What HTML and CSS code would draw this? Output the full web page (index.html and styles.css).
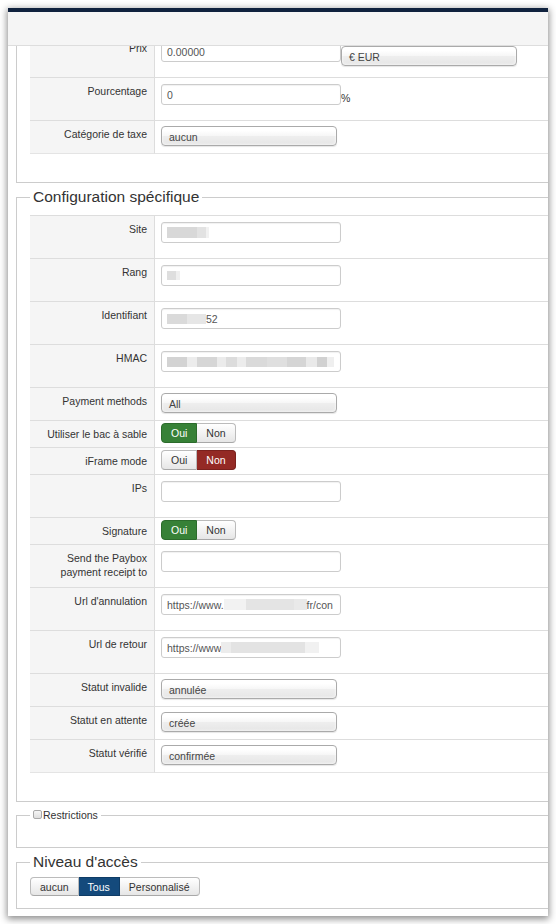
FILE: index.html
```html
<!DOCTYPE html>
<html lang="fr">
<head>
<meta charset="utf-8">
<title>Configuration</title>
<link rel="stylesheet" href="styles.css">
</head>
<body>
<div class="window">
  <div class="topbar"></div>
  <div class="toolbar"></div>
  <div class="viewport">
    <fieldset class="fs fs-first">
      <table class="params">
        <tr>
          <td class="key">Prix</td>
          <td class="field v-input"><div class="line"><div class="input">0.00000</div><div class="select cur">€ EUR</div></div></td>
        </tr>
        <tr>
          <td class="key">Pourcentage</td>
          <td class="field v-input"><div class="line"><div class="input">0</div><span class="unit">%</span></div></td>
        </tr>
        <tr>
          <td class="key">Catégorie de taxe</td>
          <td class="field v-select"><div class="select">aucun</div></td>
        </tr>
      </table>
    </fieldset>

    <fieldset class="fs fs-config">
      <legend class="big">Configuration spécifique</legend>
      <table class="params">
        <tr>
          <td class="key">Site</td>
          <td class="field v-input"><div class="input"><span class="rd rd-site"></span></div></td>
        </tr>
        <tr>
          <td class="key">Rang</td>
          <td class="field v-input"><div class="input"><span class="rd rd-rang"></span></div></td>
        </tr>
        <tr>
          <td class="key">Identifiant</td>
          <td class="field v-input"><div class="input"><span class="rd rd-ident"></span>52</div></td>
        </tr>
        <tr>
          <td class="key">HMAC</td>
          <td class="field v-input"><div class="input"><span class="rd rd-hmac"></span></div></td>
        </tr>
        <tr>
          <td class="key">Payment methods</td>
          <td class="field v-select"><div class="select">All</div></td>
        </tr>
        <tr>
          <td class="key">Utiliser le bac à sable</td>
          <td class="field v-toggle"><div class="btn-group"><span class="btn yes">Oui</span><span class="btn">Non</span></div></td>
        </tr>
        <tr>
          <td class="key">iFrame mode</td>
          <td class="field v-toggle"><div class="btn-group"><span class="btn">Oui</span><span class="btn no">Non</span></div></td>
        </tr>
        <tr>
          <td class="key">IPs</td>
          <td class="field v-input"><div class="input"></div></td>
        </tr>
        <tr>
          <td class="key">Signature</td>
          <td class="field v-toggle"><div class="btn-group"><span class="btn yes">Oui</span><span class="btn">Non</span></div></td>
        </tr>
        <tr>
          <td class="key">Send the Paybox payment receipt to</td>
          <td class="field v-input"><div class="input"></div></td>
        </tr>
        <tr>
          <td class="key">Url d'annulation</td>
          <td class="field v-input"><div class="input">https://www.<span class="rd rd-url1"></span>fr/con</div></td>
        </tr>
        <tr>
          <td class="key">Url de retour</td>
          <td class="field v-input"><div class="input">https://www<span class="rd rd-url2"></span></div></td>
        </tr>
        <tr>
          <td class="key">Statut invalide</td>
          <td class="field v-select"><div class="select">annulée</div></td>
        </tr>
        <tr>
          <td class="key">Statut en attente</td>
          <td class="field v-select"><div class="select">créée</div></td>
        </tr>
        <tr>
          <td class="key">Statut vérifié</td>
          <td class="field v-select"><div class="select">confirmée</div></td>
        </tr>
      </table>
    </fieldset>

    <fieldset class="fs fs-restr">
      <legend class="small"><span class="checkbox"></span>Restrictions</legend>
    </fieldset>

    <fieldset class="fs fs-access">
      <legend class="big">Niveau d'accès</legend>
      <div class="btn-group access">
        <span class="btn">aucun</span><span class="btn primary">Tous</span><span class="btn">Personnalisé</span>
      </div>
    </fieldset>
  </div>
</div>
</body>
</html>
```
FILE: styles.css
```css
html, body {
  margin: 0;
  padding: 0;
  background: #ffffff;
}

body {
  font-family: "Liberation Sans", Arial, sans-serif;
  font-size: 10.5px;
  color: #333333;
}

.window {
  margin: 8px;
  width: 540px;
  height: 908px;
  overflow: hidden;
  background: #ffffff;
  box-shadow: 0 2px 7px 1px rgba(0, 0, 0, 0.45);
  display: flex;
  flex-direction: column;
}

.topbar {
  flex: none;
  height: 4px;
  background: #10223e;
}

.toolbar {
  flex: none;
  height: 33px;
  background: #f5f5f5;
  border-bottom: 1px solid #dddddd;
}

.viewport {
  flex: 1;
  overflow: hidden;
}

/* fieldsets */
.fs {
  width: 560px;
  box-sizing: border-box;
  margin: 5px 0 0 8px;
  padding: 0 0 28px 13px;
  border: 1px solid #cccccc;
  min-width: 0;
}

.fs-first {
  margin-top: -12px;
  border-top: none;
}

.fs-config {
  padding-top: 9px;
}

.fs-restr {
  padding-bottom: 24px;
}

.fs-access {
  padding-top: 6px;
  padding-bottom: 12px;
}

legend {
  padding: 0 3px;
  margin: 0;
  color: #333333;
}

legend.big {
  font-size: 15.5px;
  line-height: 18px;
}

legend.small {
  font-size: 10.5px;
  line-height: 16px;
  display: flex;
  align-items: center;
}

.checkbox {
  display: inline-block;
  width: 9px;
  height: 9px;
  box-sizing: border-box;
  border: 1px solid #a9a9a9;
  border-radius: 2px;
  background: linear-gradient(#f6f6f6, #dedede);
  margin-right: 1px;
  margin-top: -1px;
}

/* parameter table */
.params {
  border-collapse: separate;
  border-spacing: 0;
  width: 540px;
}

.params td {
  border-top: 1px solid #dddddd;
  vertical-align: top;
}

.params tr:last-child td {
  border-bottom: 1px solid #e4e4e4;
}

.key {
  width: 111px;
  padding: 6px 7px 0 6px;
  background: #f5f5f5;
  border-right: 1px solid #dddddd;
  text-align: right;
  line-height: 14px;
  color: #333333;
}

.field {
  padding-left: 6px;
  padding-right: 6px;
}

.v-input {
  padding-top: 6px;
  padding-bottom: 15px;
}

.v-select {
  padding-top: 5px;
  padding-bottom: 7px;
}

.v-toggle {
  padding-top: 2px;
  padding-bottom: 4px;
}

.line {
  display: flex;
  align-items: flex-start;
}

.input {
  width: 180px;
  height: 21px;
  box-sizing: border-box;
  border: 1px solid #cccccc;
  border-radius: 3px;
  background: #ffffff;
  box-shadow: inset 0 1px 1px rgba(0, 0, 0, 0.06);
  padding: 0 5px;
  display: flex;
  align-items: center;
  color: #555555;
  white-space: nowrap;
  overflow: hidden;
}

.select {
  width: 176px;
  height: 20px;
  box-sizing: border-box;
  border: 1px solid #aaaaaa;
  border-radius: 4px;
  background: linear-gradient(#ffffff 20%, #f6f6f6 50%, #eeeeee 52%, #e6e6e6 100%);
  box-shadow: inset 0 0 3px #ffffff, 0 1px 1px rgba(0, 0, 0, 0.1);
  padding: 1px 7px 0;
  display: flex;
  align-items: center;
  color: #444444;
  white-space: nowrap;
}

.select.cur {
  margin-top: 5px;
  margin-bottom: -4px;
}

.unit {
  align-self: flex-end;
  line-height: 14px;
  color: #333333;
}

/* redacted values */
.rd {
  display: inline-block;
  flex: none;
  height: 11px;
}

.rd-site {
  width: 42px;
  background: linear-gradient(90deg, #d8d8d8 0 30px, #e2e2e2 30px 39px, #f1f1f1 39px 42px);
}

.rd-rang {
  width: 13px;
  height: 9px;
  background: linear-gradient(90deg, #dedede 0 9px, #efefef 9px 13px);
}

.rd-ident {
  width: 39px;
  height: 10px;
  background: linear-gradient(90deg, #dadada 0 20px, #e6e6e6 20px 39px);
}

.rd-hmac {
  width: 167px;
  height: 10px;
  background: linear-gradient(90deg,
    #d3d3d3 0 20px, #ececec 20px 30px, #d6d6d6 30px 50px, #ebebeb 50px 59px,
    #dcdcdc 59px 70px, #ececec 70px 79px, #dadada 79px 100px, #dfdfdf 100px 120px,
    #d5d5d5 120px 139px, #e9e9e9 139px 150px, #d1d1d1 150px 160px, #efefef 160px 167px);
}

.rd-url1 {
  width: 83px;
  height: 11px;
  background: linear-gradient(90deg, #f2f2f2 0 22px, #e4e4e4 22px 70px, #e9e9e9 70px 83px);
}

.rd-url2 {
  width: 98px;
  height: 11px;
  background: linear-gradient(90deg, #ececec 0 10px, #e3e3e3 10px 84px, #f1f1f1 84px 98px);
}

/* buttons */
.btn-group {
  display: flex;
}

.btn {
  height: 20px;
  box-sizing: border-box;
  padding: 0 9px;
  border: 1px solid #bbbbbb;
  border-bottom-color: #a8a8a8;
  background: linear-gradient(#ffffff, #e6e6e6);
  color: #333333;
  display: flex;
  align-items: center;
  white-space: nowrap;
}

.btn + .btn {
  border-left: none;
}

.btn:first-child {
  border-radius: 4px 0 0 4px;
}

.btn:last-child {
  border-radius: 0 4px 4px 0;
}

.btn.yes {
  background: #378137;
  border-color: #2c6b2c;
  color: #ffffff;
}

.btn.no {
  background: #942a25;
  border-color: #7a211d;
  color: #ffffff;
}

.btn.primary {
  background: #144a7c;
  border-color: #0f3c66;
  color: #ffffff;
}

.access .btn {
  height: 19px;
}
```
